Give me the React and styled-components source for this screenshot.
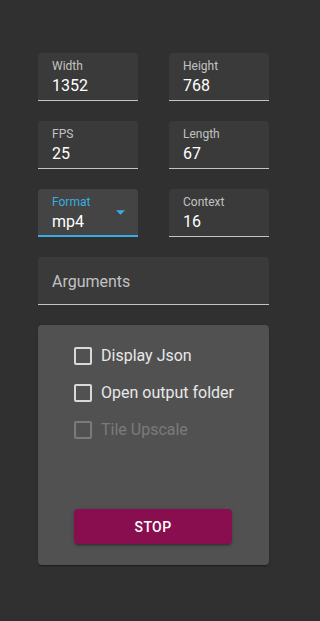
import React from 'react';
import styled, { createGlobalStyle } from 'styled-components';

const GlobalStyle = createGlobalStyle`
  body {
    margin: 0;
    background: #303030;
    font-family: Roboto, 'Liberation Sans', sans-serif;
  }
`;

// PAGE STYLES
const Page = styled.div`
  padding: 53px 31px 40px 38px;
`;

const FieldGrid = styled.div`
  display: grid;
  grid-template-columns: 100px 100px;
  column-gap: 31px;
  row-gap: 20px;
`;

const Field = styled.div`
  position: relative;
  box-sizing: border-box;
  height: 48px;
  padding: ${(props) => (props.empty ? '15px' : '6px')} 12px 0 14px;
  background: ${(props) => (props.focused ? '#444444' : '#3a3a3a')};
  border-top-left-radius: 4px;
  border-top-right-radius: 4px;
  border-bottom: ${(props) =>
    props.focused ? '2px solid #39ade3' : '1px solid rgba(255, 255, 255, 0.7)'};
  grid-column: ${(props) => (props.wide ? '1 / span 2' : 'auto')};
`;

const Label = styled.div`
  font-size: 12px;
  line-height: 14px;
  color: ${(props) => (props.focused ? '#39ade3' : 'rgba(255, 255, 255, 0.7)')};
`;

const Value = styled.div`
  margin-top: 3px;
  font-size: 16px;
  line-height: 19px;
  color: #ffffff;
`;

const Placeholder = styled.div`
  font-size: 16px;
  line-height: 19px;
  color: rgba(255, 255, 255, 0.7);
`;

const Arrow = styled.svg`
  position: absolute;
  top: 21px;
  right: 13px;
  width: 9px;
  height: 5px;
`;

// -----------PANEL----------- //

const Panel = styled.div`
  box-sizing: border-box;
  margin-top: 20px;
  width: 231px;
  height: 240px;
  padding: 12px 0 0 36px;
  background: #515151;
  border-radius: 4px;
  box-shadow: 0 2px 1px -1px rgba(0, 0, 0, 0.2), 0 1px 1px 0 rgba(0, 0, 0, 0.14),
    0 1px 3px 0 rgba(0, 0, 0, 0.12);
`;

const CheckRow = styled.label`
  display: flex;
  align-items: center;
  height: 37px;
  gap: 9px;
  font-size: 16px;
  color: ${(props) => (props.disabled ? '#7b7b7b' : '#e8e8e8')};
`;

const Box = styled.span`
  box-sizing: border-box;
  width: 18px;
  height: 18px;
  border: 2px solid ${(props) => (props.disabled ? '#7b7b7b' : '#d9d9d9')};
  border-radius: 2px;
`;

const StopButton = styled.button`
  margin-top: 61px;
  width: 158px;
  height: 35px;
  border: none;
  border-radius: 4px;
  background: #880e4f;
  color: #ffffff;
  font-family: Roboto, 'Liberation Sans', sans-serif;
  font-size: 14px;
  font-weight: 500;
  letter-spacing: 0.4px;
  box-shadow: 0 3px 1px -2px rgba(0, 0, 0, 0.2), 0 2px 2px 0 rgba(0, 0, 0, 0.14),
    0 1px 5px 0 rgba(0, 0, 0, 0.12);
`;

// styles-end

const fields = [
  { label: 'Width', value: '1352' },
  { label: 'Height', value: '768' },
  { label: 'FPS', value: '25' },
  { label: 'Length', value: '67' },
];

const options = [
  { label: 'Display Json' },
  { label: 'Open output folder' },
  { label: 'Tile Upscale', disabled: true },
];

const App = () => {
  return (
    <>
      <GlobalStyle />
      <Page>
        <FieldGrid>
          {fields.map((f) => (
            <Field key={f.label}>
              <Label>{f.label}</Label>
              <Value>{f.value}</Value>
            </Field>
          ))}

          <Field focused>
            <Label focused>Format</Label>
            <Value>mp4</Value>
            <Arrow viewBox="0 0 10 5">
              <path d="M0 0l5 5 5-5z" fill="#39ade3" />
            </Arrow>
          </Field>
          <Field>
            <Label>Context</Label>
            <Value>16</Value>
          </Field>

          <Field wide empty>
            <Placeholder>Arguments</Placeholder>
          </Field>
        </FieldGrid>

        <Panel>
          {options.map((o) => (
            <CheckRow key={o.label} disabled={o.disabled}>
              <Box disabled={o.disabled} />
              {o.label}
            </CheckRow>
          ))}
          <StopButton>STOP</StopButton>
        </Panel>
      </Page>
    </>
  );
};

export default App;
